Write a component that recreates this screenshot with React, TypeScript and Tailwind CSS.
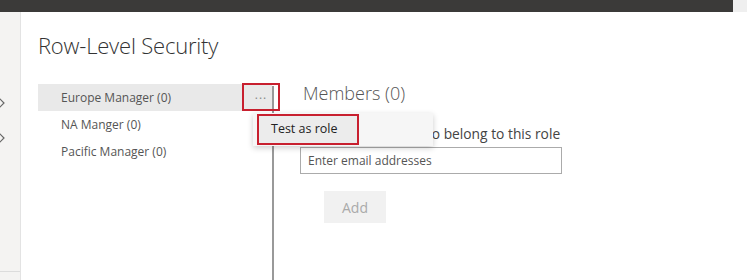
export default function App() {
  const roles = ["Europe Manager (0)", "NA Manger (0)", "Pacific Manager (0)"];
  return (
    <div
      className="w-[747px] h-[280px] overflow-hidden bg-white flex flex-col"
      style={{ fontFamily: '"Open Sans", "Noto Sans", sans-serif' }}
    >
      <div className="h-[12px] bg-[#3b3a39] flex justify-end shrink-0">
        <div className="w-[14px] h-[12px] bg-[#efefef]" />
      </div>
      <div className="flex flex-1">
        <div className="w-[21px] bg-[#f4f3f2] border-r border-[#e3e3e3] flex flex-col relative">
          <svg className="absolute left-0 top-[85px]" width="8" height="12" viewBox="0 0 8 12">
            <polyline points="-1,1 4,6 -1,11" fill="none" stroke="#666" strokeWidth="1.2" />
          </svg>
          <svg className="absolute left-0 top-[120px]" width="8" height="12" viewBox="0 0 8 12">
            <polyline points="-1,1 4,6 -1,11" fill="none" stroke="#666" strokeWidth="1.2" />
          </svg>
          <div className="absolute left-0 right-0 top-[259px] border-t border-[#dcdcdc]" />
        </div>
        <div className="flex-1 flex flex-col pl-[17px] relative">
          <div className="pt-[17px] h-[72px] text-[22px] font-light text-[#333] tracking-[-0.2px]">
            Row-Level Security
          </div>
          <div className="flex flex-1">
            <div className="w-[234px] flex flex-col">
              {roles.map((r, i) => (
                <div
                  key={r}
                  className={`h-[27px] pl-[23px] flex items-center text-[12px] text-[#555] ${
                    i === 0 ? "bg-[#e9e9e9]" : ""
                  }`}
                >
                  {r}
                </div>
              ))}
            </div>
            <div className="w-[2px] bg-[#999] mt-[2px]" />
            <div className="flex flex-col pl-[25px]">
              <div className="pl-[4px] text-[18px] font-light text-[#555] leading-[24px] -mt-[3px]">
                Members (0)
              </div>
              <div className="mt-[19px] text-[13.8px] text-[#444] leading-[19px]">
                People or groups who belong to this role
              </div>
              <div className="mt-[4px] ml-[1px] w-[262px] h-[27px] border border-[#ababab] flex items-center pl-[7px] text-[12px] text-[#555]">
                Enter email addresses
              </div>
              <div className="mt-[17px] ml-[25px] w-[62px] h-[32px] bg-[#f1f1f1] flex items-center justify-center text-[14px] text-[#aaa]">
                Add
              </div>
            </div>
          </div>

          <div className="absolute left-[221px] top-[71px] w-[38px] h-[28px] border-2 border-[#c8202f] flex items-center justify-center text-[12px] text-[#888] tracking-[1px]">
            <span className="-mt-[4px]">...</span>
          </div>

          <div className="absolute left-[232px] top-[101px] w-[180px] h-[33px] bg-[#f6f6f6] shadow-[0_2px_6px_rgba(0,0,0,0.2)] flex items-center">
            <div className="ml-[4px] w-[102px] h-[31px] border-2 border-[#c8202f] bg-[#ececec] flex items-center pl-[12px] text-[12.5px] text-[#222]">
              Test as role
            </div>
          </div>
        </div>
      </div>
    </div>
  );
}
